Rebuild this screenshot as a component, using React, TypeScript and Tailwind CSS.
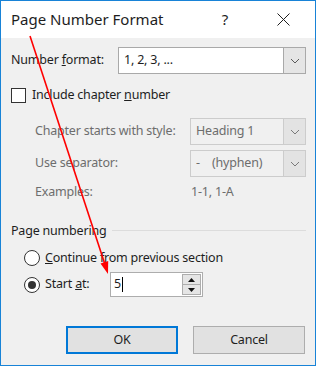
import React from "react";

const Chevron = ({ color = "#5a5a5a" }: { color?: string }) => (
  <svg width="10" height="6" viewBox="0 0 10 6">
    <polyline points="1,1 5,5 9,1" fill="none" stroke={color} strokeWidth="1" />
  </svg>
);

const Select = ({
  text,
  disabled,
  w,
}: {
  text: string;
  disabled?: boolean;
  w: string;
}) => (
  <div
    className={`${w} h-full flex border ${
      disabled ? "border-[#cccccc] bg-[#f0f0f0] text-[#6d6d6d]" : "border-[#a9a9a9] bg-white text-[#1e1e1e]"
    }`}
  >
    <div className="flex-1 flex items-center pl-[5px] whitespace-pre">{text}</div>
    <div
      className={`w-[22px] h-full flex items-center justify-center border-l ${
        disabled ? "border-[#cccccc] bg-[#e3e3e3]" : "border-[#a9a9a9] bg-[#e5e5e5]"
      }`}
    >
      <Chevron color={disabled ? "#7a7a7a" : "#5a5a5a"} />
    </div>
  </div>
);

export default function App() {
  return (
    <div
      className="relative w-[316px] h-[366px] border border-[#1883d7] flex flex-col text-[12.5px] tracking-[-0.2px] text-[#1e1e1e] overflow-hidden"
      style={{ fontFamily: '"Noto Sans", "Open Sans", sans-serif' }}
    >
      {/* Title bar */}
      <div className="h-[37px] bg-white flex items-center shrink-0 tracking-normal">
        <div className="pl-[10px] text-[15px] text-[#1e1e1e] flex-1">Page Number Format</div>
        <div className="w-[20px] text-center text-[15px] mr-[42px]">?</div>
        <svg width="13" height="13" viewBox="0 0 13 13" className="mr-[25px]">
          <path d="M0.5 0.5 L12.5 12.5 M12.5 0.5 L0.5 12.5" stroke="#1e1e1e" strokeWidth="1" />
        </svg>
      </div>

      {/* Content */}
      <div className="flex-1 bg-[#f0f0f0] flex flex-col pl-[10px] pr-[9px]">
        <div className="mt-[9px] h-[27px] flex items-center">
          <div className="flex-1">
            Number <span className="underline">f</span>ormat:
          </div>
          <Select text="1, 2, 3, ..." w="w-[188px]" />
        </div>

        <div className="mt-[14px] h-[15px] flex items-center">
          <div className="w-[15px] h-[15px] border border-[#333333] bg-white shrink-0" />
          <div className="ml-[6px]">
            Include chapter <span className="underline">n</span>umber
          </div>
        </div>

        <div className="mt-[15px] h-[27px] flex items-center pl-[24px] text-[#6d6d6d]">
          <div className="flex-1">Chapter starts with style:</div>
          <Select text="Heading 1" w="w-[116px]" disabled />
        </div>

        <div className="mt-[5px] h-[27px] flex items-center pl-[24px] text-[#6d6d6d]">
          <div className="flex-1">Use separator:</div>
          <Select text={"-    (hyphen)"} w="w-[116px]" disabled />
        </div>

        <div className="mt-[6px] h-[18px] flex items-center pl-[24px] text-[#6d6d6d]">
          <div className="w-[156px]">Examples:</div>
          <div>1-1, 1-A</div>
        </div>

        <div className="mt-[21px] h-[18px] flex items-center">
          <div>Page numbering</div>
          <div className="flex-1 ml-[6px] h-px bg-[#dcdcdc] mb-[2px]" />
        </div>

        <div className="mt-[8px] h-[20px] flex items-center pl-[13px]">
          <div className="w-[16px] h-[16px] rounded-full border border-[#333333] bg-white shrink-0" />
          <div className="ml-[5px]">
            <span className="underline">C</span>ontinue from previous section
          </div>
        </div>

        <div className="mt-[4px] h-[25px] flex items-center pl-[13px]">
          <div className="w-[16px] h-[16px] rounded-full border border-[#333333] bg-white shrink-0 flex items-center justify-center">
            <div className="w-[8px] h-[8px] rounded-full bg-[#333333]" />
          </div>
          <div className="ml-[5px] w-[65px]">
            Start <span className="underline">a</span>t:
          </div>
          <div className="w-[93px] h-[25px] border border-[#adadad] bg-white flex">
            <div className="flex-1 flex items-center pl-[3px]">
              5<div className="w-px h-[15px] bg-black ml-px" />
            </div>
            <div className="w-[19px] flex flex-col py-px mr-px">
              <div className="flex-1 border border-[#adadad] bg-[#e5e5e5] flex items-center justify-center">
                <svg width="7" height="4" viewBox="0 0 7 4"><polygon points="3.5,0 7,4 0,4" fill="#111" /></svg>
              </div>
              <div className="flex-1 border border-t-0 border-[#adadad] bg-[#e5e5e5] flex items-center justify-center">
                <svg width="7" height="4" viewBox="0 0 7 4"><polygon points="0,0 7,0 3.5,4" fill="#111" /></svg>
              </div>
            </div>
          </div>
        </div>

        <div className="mt-[29px] h-[28px] flex justify-end gap-[15px] pr-px">
          <button className="w-[112px] h-[28px] border-2 border-[#0078d7] bg-[#e1e1e1] text-[#1e1e1e]">OK</button>
          <button className="w-[112px] h-[28px] border border-[#adadad] bg-[#e1e1e1] text-[#1e1e1e]">Cancel</button>
        </div>
      </div>

      {/* Red arrow overlay */}
      <svg className="absolute left-[-1px] top-[-1px] pointer-events-none" width="316" height="366" viewBox="0 0 316 366">
        <line x1="30" y1="36" x2="104.5" y2="263" stroke="#ff0000" strokeWidth="1.6" />
        <polygon points="108,274 100.5,263.5 108.2,261" fill="#ff0000" />
      </svg>
    </div>
  );
}
